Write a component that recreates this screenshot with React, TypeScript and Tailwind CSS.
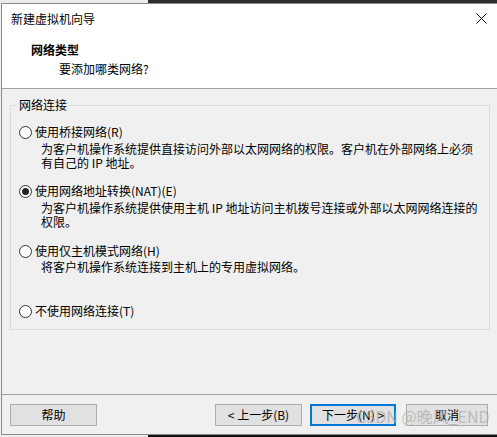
const font = { fontFamily: '"Noto Sans CJK SC", "Noto Sans", sans-serif' };

function Radio({ checked }: { checked?: boolean }) {
  return (
    <span className="w-[13px] h-[13px] rounded-full border border-[#333] bg-white flex items-center justify-center shrink-0">
      {checked && <span className="w-[7px] h-[7px] rounded-full bg-[#222]" />}
    </span>
  );
}

function Option({ label, checked }: { label: string; checked?: boolean }) {
  return (
    <div className="flex items-center h-[16px] gap-[3px] pl-[8px]">
      <Radio checked={checked} />
      <span className="text-[12px] leading-[16px] text-black whitespace-nowrap">{label}</span>
    </div>
  );
}

function Desc({ lines, className }: { lines: string[]; className?: string }) {
  return (
    <div className={`pl-[30px] text-[12px] leading-[14px] text-black whitespace-nowrap ${className ?? ''}`}>
      {lines.map((l) => (
        <div key={l}>{l}</div>
      ))}
    </div>
  );
}

function Button({ children, primary, className }: { children: React.ReactNode; primary?: boolean; className?: string }) {
  return (
    <div
      className={`h-[22px] flex items-center justify-center text-[12px] text-black bg-[#e1e1e1] ${
        primary ? 'border-2 border-[#0078d7]' : 'border border-[#adadad]'
      } ${className ?? ''}`}
    >
      {children}
    </div>
  );
}

export default function App() {
  return (
    <div className="w-[497px] h-[437px] overflow-hidden bg-[#f0f0f0] flex flex-col relative" style={font}>
      {/* desktop strip above the window */}
      <div className="h-[3px] flex shrink-0">
        <div className="w-[148px] bg-[#ececec]" />
        <div className="flex-1 bg-[#2d2d2d]" />
      </div>

      <div className="ml-px flex-1 flex flex-col border-l border-t border-b border-[#8a8a8a]">
        {/* title bar */}
        <div className="h-[29px] bg-white flex items-center justify-between pl-[9px] pr-[9px] shrink-0">
          <span className="text-[12px] text-black">新建虚拟机向导</span>
          <svg width="11" height="11" viewBox="0 0 11 11" className="mr-[1px]">
            <path d="M0.5 0.5 L10.5 10.5 M10.5 0.5 L0.5 10.5" stroke="#111" strokeWidth="1" />
          </svg>
        </div>

        {/* header */}
        <div className="h-[56px] bg-white border-b border-[#a0a0a0] pt-[9px] pl-[29px] shrink-0">
          <div className="text-[12px] leading-[16px] font-bold text-black">网络类型</div>
          <div className="text-[12px] leading-[16px] text-black pl-[28px] mt-[3px]">要添加哪类网络?</div>
        </div>

        {/* body */}
        <div className="flex-1 pt-[16px] pl-[8px] pr-[7px]">
          <div className="relative border border-[#dcdcdc] h-[225px] pt-[18px]">
            <span className="absolute left-[6px] top-[-9px] px-[2px] bg-[#f0f0f0] text-[12px] leading-[16px] text-black">
              网络连接
            </span>
            <Option label="使用桥接网络(R)" />
            <Desc
              className="mt-[2px]"
              lines={['为客户机操作系统提供直接访问外部以太网网络的权限。客户机在外部网络上必须', '有自己的 IP 地址。']}
            />
            <div className="mt-[13px]">
              <Option label="使用网络地址转换(NAT)(E)" checked />
            </div>
            <Desc
              className="mt-[2px]"
              lines={['为客户机操作系统提供使用主机 IP 地址访问主机拨号连接或外部以太网网络连接的', '权限。']}
            />
            <div className="mt-[14px]">
              <Option label="使用仅主机模式网络(H)" />
            </div>
            <Desc className="mt-[1px]" lines={['将客户机操作系统连接到主机上的专用虚拟网络。']} />
            <div className="mt-[29px]">
              <Option label="不使用网络连接(T)" />
            </div>
          </div>
        </div>

        {/* footer */}
        <div className="h-[40px] border-t border-[#a0a0a0] shrink-0 flex items-start pt-[9px] pl-[8px]">
          <Button className="w-[87px]">帮助</Button>
          <Button className="w-[87px] ml-[118px]">&lt; 上一步(B)</Button>
          <Button primary className="w-[86px] ml-[8px]">下一步(N) &gt;</Button>
          <Button className="w-[82px] ml-[10px]">取消</Button>
        </div>
      </div>

      <div className="h-[2px] flex shrink-0">
        <div className="w-[148px] bg-[#ececec]" />
        <div className="flex-1 bg-[#111]" />
      </div>

      {/* watermark */}
      <span className="absolute left-[356px] top-[406px] text-[16px] leading-[20px] text-[#a8a8a8]/70 whitespace-nowrap">
        CSDN @晚风_END
      </span>
    </div>
  );
}
